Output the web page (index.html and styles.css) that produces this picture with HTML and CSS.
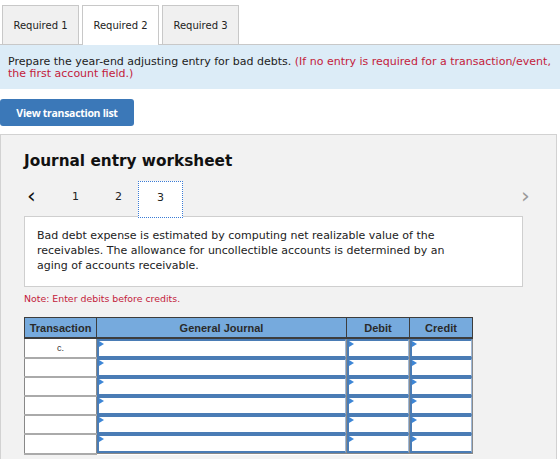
FILE: index.html
```html
<!DOCTYPE html>
<html lang="en">
<head>
    <meta charset="UTF-8">
    <meta name="viewport" content="width=device-width, initial-scale=1.0">
    <title>Journal entry worksheet</title>
    <link rel="stylesheet" href="styles.css">
</head>
<body>
    <div class="tabs">
        <button class="tab">Required 1</button>
        <button class="tab active">Required 2</button>
        <button class="tab">Required 3</button>
    </div>
    <p class="instructions">Prepare the year-end adjusting entry for bad debts. <span class="red">(If no entry is required for a transaction/event,</span><br><span class="red">the first account field.)</span></p>

    <button class="view-btn">View transaction list</button>

    <div class="worksheet">
        <h2>Journal entry worksheet</h2>
        <div class="pager">
            <span class="arrow prev">&#8249;</span>
            <span class="page">1</span>
            <span class="page">2</span>
            <span class="page current">3</span>
            <span class="arrow next">&#8250;</span>
        </div>
        <div class="desc">
            Bad debt expense is estimated by computing net realizable value of the<br>
            receivables. The allowance for uncollectible accounts is determined by an<br>
            aging of accounts receivable.
        </div>
        <p class="note">Note: Enter debits before credits.</p>

        <table class="journal">
            <thead>
                <tr>
                    <th class="col-tr">Transaction</th>
                    <th class="col-gj">General Journal</th>
                    <th class="col-amt">Debit</th>
                    <th class="col-amt">Credit</th>
                </tr>
            </thead>
            <tbody id="rows"></tbody>
        </table>
    </div>

    <script>
        const rows = document.getElementById('rows');
        for (let i = 0; i < 6; i++) {
            const tr = document.createElement('tr');
            tr.innerHTML = `
                <td class="tr-cell">${i === 0 ? 'c.' : ''}</td>
                <td class="entry"><div class="field"></div></td>
                <td class="entry"><div class="field"></div></td>
                <td class="entry"><div class="field"></div></td>`;
            rows.appendChild(tr);
        }
    </script>
</body>
</html>
```

FILE: styles.css
```css
body {
    margin: 0;
    font-family: 'DejaVu Sans', Verdana, sans-serif;
    font-size: 11px;
    color: #222;
    background: #fff;
    overflow: hidden;
}
.tabs {
    display: flex;
    gap: 3px;
    padding: 5px 0 0 2px;
    border-bottom: 1px solid #c8c8c8;
}
.tab {
    width: 77px;
    height: 39px;
    margin-bottom: -1px;
    border: 1px solid #c8c8c8;
    border-bottom: none;
    background: #f0f0f0;
    font-family: 'DejaVu Sans', Verdana, sans-serif;
    font-size: 10px;
    color: #222;
    padding: 0;
}
.tab.active {
    background: #fff;
    height: 40px;
}
.instructions {
    margin: 0;
    background: #dcecf7;
    padding: 11px 8px 9px;
    line-height: 12px;
}
.red {
    color: #c3213b;
}
.view-btn {
    display: block;
    margin: 10px 0 0;
    width: 134px;
    height: 27px;
    border: none;
    border-radius: 3px;
    background: #3b78b8;
    color: #fff;
    font-family: 'Open Sans', sans-serif;
    font-weight: 700;
    font-size: 10.5px;
    letter-spacing: -0.3px;
    padding: 0;
}
.worksheet {
    margin-top: 8px;
    width: 557px;
    height: 330px;
    background: #f2f2f2;
    border: 1px solid #d2d2d2;
    padding: 0 0 0 23px;
    box-sizing: border-box;
}
.worksheet h2 {
    margin: 0;
    padding-top: 17px;
    font-size: 15.3px;
    line-height: 18px;
    font-weight: bold;
    color: #111;
}
.pager {
    display: flex;
    align-items: flex-start;
    height: 37px;
    margin-top: 11px;
    position: relative;
}
.arrow {
    font-size: 22px;
    line-height: 20px;
    margin-top: 5px;
}
.prev {
    margin-left: 3px;
    width: 45px;
    color: #111;
}
.page {
    width: 43px;
    font-size: 11px;
    line-height: 13px;
    margin-top: 9px;
}
.page:nth-child(3) {
    width: 23px;
}
.page.current {
    width: 45px;
    height: 37px;
    margin-top: 0;
    box-sizing: border-box;
    padding-bottom: 5px;
    background: #fff;
    border: 1px dotted #3a7bd5;
    display: flex;
    align-items: center;
    justify-content: center;
}
.next {
    position: absolute;
    left: 497px;
    color: #9a9a9a;
}
.desc {
    width: 499px;
    box-sizing: border-box;
    margin-top: -2px;
    background: #fff;
    border: 1px solid #cfcfcf;
    padding: 11px 12px 13px;
    line-height: 15px;
}
.note {
    margin: 6px 0 0;
    color: #c3213b;
    font-size: 9.4px;
    line-height: 12px;
}
.journal {
    margin-top: 12px;
    width: 448px;
    table-layout: fixed;
    border-collapse: collapse;
    font-family: 'Liberation Sans', Arial, sans-serif;
    background: #fff;
    border-left: 1px solid #888;
    border-bottom: 1px solid #888;
}
.journal th {
    height: 19px;
    padding: 0;
    background: #76aadd;
    border: 1px solid #3d3d3d;
    border-bottom-width: 2px;
    font-size: 11px;
    font-weight: bold;
    color: #2a2a2a;
}
.col-tr { width: 71px; }
.col-gj { width: 249px; }
.col-amt { width: 62px; }
.tr-cell {
    height: 17px;
    padding: 0;
    border-right: 1px solid #8a8a8a;
    border-bottom: 2px solid #aaa;
    text-align: center;
    font-size: 9px;
    color: #333;
}
.entry {
    padding: 0;
    border-right: 1px solid #8a8a8a;
}
.field {
    position: relative;
    height: 15px;
    border: 2px solid #4a7cb5;
    border-right: 1px solid #9fb9d8;
    border-bottom-width: 2px;
    background: #fff;
}
.field::before {
    content: '';
    position: absolute;
    left: 0;
    top: 0;
    border-top: 3px solid transparent;
    border-bottom: 3px solid transparent;
    border-left: 5px solid #3d86d6;
}
```
